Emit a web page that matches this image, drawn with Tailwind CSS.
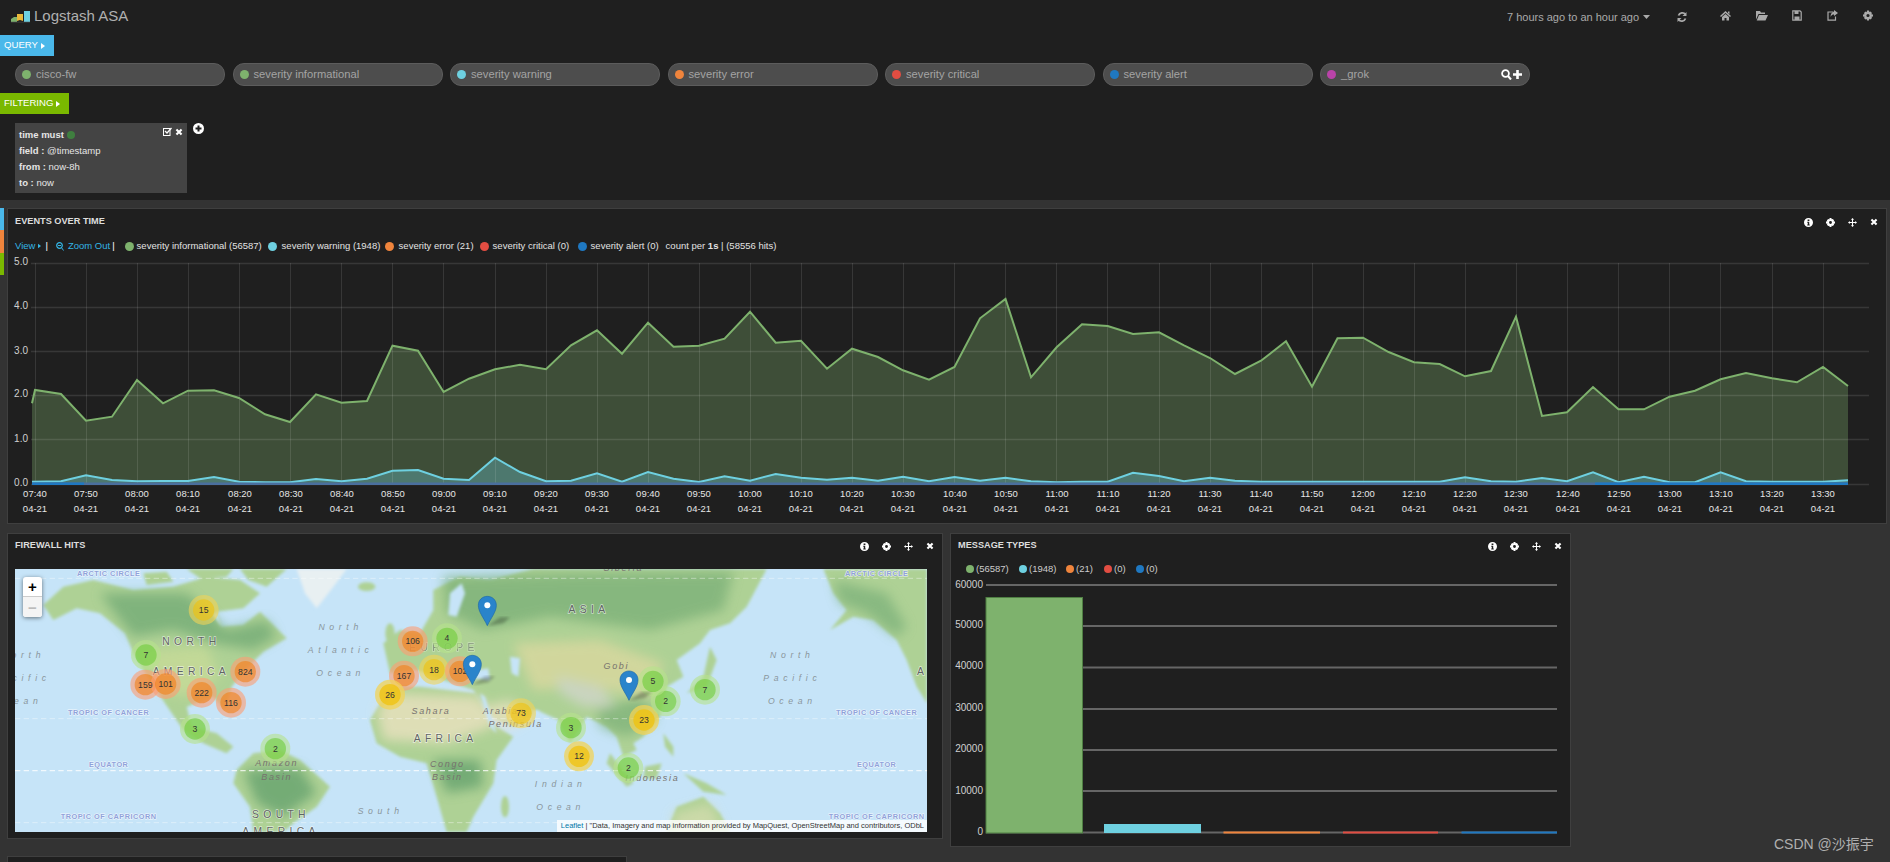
<!DOCTYPE html>
<html lang="en">
<head>
<meta charset="utf-8">
<title>Logstash ASA</title>
<script src="https://cdn.jsdelivr.net/npm/@tailwindcss/browser@4"></script>
</head>
<body class="bg-[#333333] h-[862px] w-[1890px] overflow-hidden relative font-['Liberation_Sans',Arial,sans-serif] text-[10px] text-[#cccccc]">

<svg class="hidden" width="0" height="0">
  <defs>
    <symbol id="i-info" viewBox="0 0 10 10"><path fill="currentColor" fill-rule="evenodd" d="M5 0a5 5 0 1 1 0 10A5 5 0 0 1 5 0ZM4 1.7V3.2H6V1.7ZM3.6 4.2V5.2H4.2V7.2H3.6V8.2H6.4V7.2H5.8V4.2Z"/></symbol>
    <symbol id="i-gear" viewBox="0 0 10 10"><path fill="currentColor" fill-rule="evenodd" d="M4 0H6L6.3 1.5 7.5 1 9 2.5 8.3 3.7 10 4V6L8.5 6.3 9 7.5 7.5 9 6.3 8.3 6 10H4L3.7 8.5 2.5 9 1 7.5 1.7 6.3 0 6V4L1.5 3.7 1 2.5 2.5 1 3.7 1.7ZM5 3.4A1.6 1.6 0 1 0 5 6.6 1.6 1.6 0 0 0 5 3.4Z"/></symbol>
    <symbol id="i-move" viewBox="0 0 10 10"><path fill="currentColor" d="M5 0 6.8 2H5.6V4.4H8V3.2L10 5 8 6.8V5.6H5.6V8H6.8L5 10 3.2 8H4.4V5.6H2V6.8L0 5 2 3.2V4.4H4.4V2H3.2Z"/></symbol>
    <symbol id="i-x" viewBox="0 0 10 10"><path stroke="currentColor" stroke-width="2.6" fill="none" d="M1.8 1.8 8.2 8.2M8.2 1.8 1.8 8.2"/></symbol>
    <symbol id="i-caret" viewBox="0 0 4 6"><path fill="currentColor" d="M0 0 4 3 0 6Z"/></symbol>
  </defs>
</svg>

<!-- top area -->
<section class="h-[200px] bg-[#1f1f1f] relative">
  <nav class="h-[35px] flex items-start">
    <svg class="mt-[11px] ml-[11px]" width="20" height="12" viewBox="0 0 20 12"><path fill="#7eb26d" d="M0 8 3 6H6V11H0Z"/><path fill="#eab839" d="M6 3H12V10L9 9 6 10Z"/><path fill="#6ed0e0" d="M13 0H19V11H13Z"/><path fill="#444" d="M0 10.5H19V12H0Z" opacity=".5"/></svg>
    <h1 class="ml-[3px] mt-[7px] text-[15px] leading-[18px] font-normal text-[#b0b0b0]">Logstash ASA</h1>
    <div class="ml-auto mt-[11px] flex items-center text-[#aaaaaa] pr-[17px]">
      <span class="text-[11px] leading-[12px] w-[132px] whitespace-nowrap">7 hours ago to an hour ago</span>
      <svg class="ml-[4px]" width="7" height="4" viewBox="0 0 7 4"><path fill="currentColor" d="M0 0H7L3.5 4Z"/></svg>
      <svg class="ml-[27px]" width="10" height="12" viewBox="0 0 10 12"><path fill="none" stroke="currentColor" stroke-width="1.8" d="M8.5 3.5A4 4 0 0 0 1.5 4.5M1.5 8.500A4 4 0 0 0 8.500 7.500"/><path fill="currentColor" d="M9.500 1V5H5.500ZM.5 11V7H4.500Z"/></svg>
      <svg class="ml-[33px] -mt-[3px]" width="11" height="11" viewBox="0 0 11 11"><path fill="currentColor" d="M5.500 1 11 6 10 7 5.500 3 1 7 0 6ZM2 7 5.500 4 9 7V10.500H6.500V8H4.500V10.500H2ZM8 1.500H9.500V4L8 3Z"/></svg>
      <svg class="ml-[25px] -mt-[3px]" width="12" height="11" viewBox="0 0 12 11"><path fill="currentColor" d="M0 1H4L5 2.500H9V4H2.500L0 9.500ZM3 5H12L9.500 10.500H.7Z"/></svg>
      <svg class="ml-[24px] -mt-[3px]" width="10" height="11" viewBox="0 0 10 11"><path fill="none" stroke="currentColor" stroke-width="1.200" d="M.8.8H8L9.200 2V10.200H.8Z"/><path fill="currentColor" d="M2.500 1H6.500V4H2.500ZM2.500 6.500H7.500V10H2.500Z"/></svg>
      <svg class="ml-[25px] -mt-[3px]" width="11" height="11" viewBox="0 0 11 11"><path fill="none" stroke="currentColor" stroke-width="1.200" d="M6.500 2H1V10.200H8.500V6.500"/><path fill="currentColor" d="M7 0 11 3 7 6V4.500C5.500 4.500 4.500 5 3.500 7 3.500 4 5 2 7 1.800Z"/></svg>
      <svg class="ml-[25px] -mt-[3px] w-[10px] h-[11px]"><use href="#i-gear"/></svg>
    </div>
  </nav>

  <button class="block h-[21px] w-[54px] bg-[#4ab8ea] text-white text-[9.6px] text-left pl-[4px] flex items-center gap-[3px]">QUERY <svg class="w-[4px] h-[6px]"><use href="#i-caret"/></svg></button>

  <div class="mt-[7px] ml-[15px] flex gap-[7.5px]">
    <div class="w-[210px] h-[23px] rounded-[11px] bg-[#4d4d4d] border border-[#5c5c5c] flex items-center pl-[6px] text-[11.2px] text-[#a4a4a4]"><i class="w-[9px] h-[9px] rounded-full bg-[#7eb26d] mr-[5px]"></i>cisco-fw</div>
    <div class="w-[210px] h-[23px] rounded-[11px] bg-[#4d4d4d] border border-[#5c5c5c] flex items-center pl-[6px] text-[11.2px] text-[#a4a4a4]"><i class="w-[9px] h-[9px] rounded-full bg-[#7eb26d] mr-[5px]"></i>severity informational</div>
    <div class="w-[210px] h-[23px] rounded-[11px] bg-[#4d4d4d] border border-[#5c5c5c] flex items-center pl-[6px] text-[11.2px] text-[#a4a4a4]"><i class="w-[9px] h-[9px] rounded-full bg-[#6ed0e0] mr-[5px]"></i>severity warning</div>
    <div class="w-[210px] h-[23px] rounded-[11px] bg-[#4d4d4d] border border-[#5c5c5c] flex items-center pl-[6px] text-[11.2px] text-[#a4a4a4]"><i class="w-[9px] h-[9px] rounded-full bg-[#ef843c] mr-[5px]"></i>severity error</div>
    <div class="w-[210px] h-[23px] rounded-[11px] bg-[#4d4d4d] border border-[#5c5c5c] flex items-center pl-[6px] text-[11.2px] text-[#a4a4a4]"><i class="w-[9px] h-[9px] rounded-full bg-[#e24d42] mr-[5px]"></i>severity critical</div>
    <div class="w-[210px] h-[23px] rounded-[11px] bg-[#4d4d4d] border border-[#5c5c5c] flex items-center pl-[6px] text-[11.2px] text-[#a4a4a4]"><i class="w-[9px] h-[9px] rounded-full bg-[#1f78c1] mr-[5px]"></i>severity alert</div>
    <div class="w-[210px] h-[23px] rounded-[11px] bg-[#4d4d4d] border border-[#5c5c5c] flex items-center pl-[6px] text-[11.2px] text-[#a4a4a4]"><i class="w-[9px] h-[9px] rounded-full bg-[#ba43a9] mr-[5px]"></i>_grok
      <span class="ml-auto mr-[7px] flex items-center gap-[1px] text-white">
        <svg width="11" height="11" viewBox="0 0 11 11"><circle cx="4.500" cy="4.500" r="3.400" fill="none" stroke="currentColor" stroke-width="1.800"/><path stroke="currentColor" stroke-width="2" d="M7 7 10 10.500"/></svg>
        <svg width="9" height="9" viewBox="0 0 9 9"><path stroke="currentColor" stroke-width="2.600" d="M4.500 0V9M0 4.500H9"/></svg>
      </span>
    </div>
  </div>

  <button class="block mt-[7px] h-[21px] w-[69px] bg-[#7ab800] text-white text-[9.6px] text-left pl-[4px] flex items-center gap-[3px]">FILTERING <svg class="w-[4px] h-[6px]"><use href="#i-caret"/></svg></button>

  <div class="mt-[9px] ml-[15px] flex items-start">
    <div class="w-[172px] h-[70px] bg-[#444444] pl-[4px] pt-[4px] text-[9.5px] leading-[16px] text-[#e6e6e6] relative">
      <div class="flex items-center font-bold">time must <i class="ml-[3px] w-[8px] h-[8px] rounded-full bg-[#3f7f3f]"></i></div>
      <div><b>field :</b> @timestamp</div>
      <div><b>from :</b> now-8h</div>
      <div><b>to :</b> now</div>
      <div class="absolute top-[4px] right-[4px] flex items-center gap-[3px] text-white">
        <svg width="9" height="9" viewBox="0 0 9 9"><rect x=".5" y="1.500" width="6.500" height="7" fill="none" stroke="currentColor"/><path fill="none" stroke="currentColor" stroke-width="1.300" d="M2 4 4 6 8.500 1"/></svg>
        <svg class="w-[8px] h-[8px]"><use href="#i-x"/></svg>
      </div>
    </div>
    <svg class="ml-[6px]" width="11" height="11" viewBox="0 0 11 11"><path fill="#ffffff" fill-rule="evenodd" d="M5.500 0a5.500 5.500 0 1 1 0 11 5.500 5.500 0 0 1 0-11ZM4.500 2.500V4.500H2.500V6.500H4.500V8.500H6.500V6.500H8.500V4.500H6.500V2.500Z"/></svg>
  </div>
</section>

<!-- events over time -->
<div class="mt-[8px] flex items-start">
  <div class="w-[4px] mr-[3px] flex flex-col">
    <div class="h-[22px] bg-[#4ab8ea]"></div>
    <div class="h-[23px] bg-[#ef843c]"></div>
    <div class="h-[22px] bg-[#7ab800]"></div>
  </div>
  <article class="w-[1880px] h-[316px] bg-[#1f1f1f] border border-[#3f3f3f]">
    <header class="h-[26px] flex items-center pl-[7px] pr-[8px]">
      <h2 class="text-[9.2px] font-bold text-[#dddddd]">EVENTS OVER TIME</h2>
      <div class="ml-auto flex items-center gap-[13px] text-white">
        <svg class="w-[9px] h-[9px]"><use href="#i-info"/></svg>
        <svg class="w-[9px] h-[9px]"><use href="#i-gear"/></svg>
        <svg class="w-[9px] h-[9px]"><use href="#i-move"/></svg>
        <svg class="w-[8px] h-[8px]"><use href="#i-x"/></svg>
      </div>
    </header>
    <div class="h-[22px] flex items-center pl-[7px] text-[9.5px] text-[#e2e2e2] whitespace-nowrap">
      <span class="text-[#33b5e5]">View</span>
      <svg class="ml-[3px] w-[3px] h-[6px] text-[#33b5e5]"><use href="#i-caret"/></svg>
      <span class="ml-[4px] mr-[8px] text-white">|</span>
      <svg class="mr-[4px] text-[#33b5e5]" width="8" height="9" viewBox="0 0 8 9"><circle cx="3.500" cy="3.500" r="2.800" fill="none" stroke="currentColor" stroke-width="1.200"/><path stroke="currentColor" d="M2 3.500H5M5.500 5.500 7.500 8.500"/></svg>
      <span class="text-[#33b5e5]">Zoom Out</span>
      <span class="ml-[2px] mr-[10px] text-white">|</span>
      <i class="w-[9px] h-[9px] rounded-full bg-[#7eb26d] mr-[3px]"></i><span class="w-[131px]">severity informational (56587)</span>
      <i class="w-[9px] h-[9px] rounded-full bg-[#6ed0e0] mr-[5px]"></i><span class="w-[103px]">severity warning (1948)</span>
      <i class="w-[9px] h-[9px] rounded-full bg-[#ef843c] mr-[5px]"></i><span class="w-[81px]">severity error (21)</span>
      <i class="w-[9px] h-[9px] rounded-full bg-[#e24d42] mr-[4px]"></i><span class="w-[85px]">severity critical (0)</span>
      <i class="w-[9px] h-[9px] rounded-full bg-[#1f78c1] mr-[4px]"></i><span class="w-[75px]">severity alert (0)</span>
      <span>count per <b>1s</b> | (58556 hits)</span>
    </div>
    <svg class="block" width="1878" height="266" viewBox="8 257 1878 266">
      <!-- series -->
      <polygon fill="#7eb26d" fill-opacity=".32" points="32,484 32,403.3 35,390 61,394 86,420.700 112,416.700 137,380 163,403.300 188,390.700 214,390.300 239,398 265,414.300 290,422 316,394.300 341.500,402.700 367,401 392.500,345.700 418,350.700 443.600,392 469,378.700 495,369.300 520,364.700 546,369.300 571,345.300 597,330.300 622,353.700 648,322.700 673.500,346.700 699,345.700 724.600,338.700 750,311.700 775.700,342.700 801,340.700 827,368.700 852,348.700 878,357 903,370.300 929,379.700 954.500,367 980,318.300 1005.500,299 1031,377.300 1056.600,347.300 1082,324.300 1107.700,326 1133,334 1159,332.300 1184,345.300 1210,358 1235,374 1261,360.700 1286,341.300 1312,386.700 1337.500,338.300 1363,337.700 1388.600,352 1414,362.300 1439.700,364 1465,376.300 1491,371 1516,316.700 1542,416 1567,412.300 1593,387 1618.500,409.300 1644,409.300 1669.600,396.700 1695,390.700 1720.600,379.300 1746,373 1772,378.300 1797,382.300 1823,367 1848,386 1848,484"/>
      <polygon fill="#6ed0e0" fill-opacity=".32" points="32,484 32,481.700 61,481.300 86,475.300 112,480 137,481.300 163,481 188,481 214,477 239,481.700 265,482.300 290,482.300 316,479 341.500,481.300 367,478.700 392.500,470.700 418,470 443.600,478.700 469,480 495,457.700 520,472 546,481.300 571,480.700 597,473.300 622,481.700 648,472 673.500,478.700 699,482 724.600,476.300 750,480.700 775.700,474 801,477.700 827,479.700 852,477.700 878,480.700 903,476.700 929,481.300 954.500,477 980,480.700 1005.500,477.700 1031,481.300 1056.600,482.300 1082,481.700 1107.700,481.700 1133,472.700 1159,476 1184,481.300 1210,477.700 1235,480.700 1261,481.700 1286,481.700 1312,481.700 1337.500,481.700 1363,481.700 1388.600,481.700 1414,481.700 1439.700,481.700 1465,477.300 1491,481.300 1516,481.700 1542,478 1567,481.300 1593,472.300 1618.500,482.300 1644,476.700 1669.600,482.300 1695,482.300 1720.600,472.300 1746,481.300 1772,481.700 1797,481.700 1823,481.700 1848,480.300 1848,484"/>
      <!-- grid -->
      <g stroke="#ffffff" stroke-opacity=".11" stroke-width="1">
        <path d="M31 263.500H1869M31 307.500H1869M31 351.500H1869M31 395.500H1869M31 439.500H1869M31 484.500H1869" stroke-width="1.500"/>
        <path d="M35.500 263V484M86.500 263V484M137.500 263V484M188.500 263V484M239.500 263V484M290.500 263V484M341.500 263V484M392.500 263V484M443.500 263V484M495.500 263V484M546.500 263V484M597.500 263V484M648.500 263V484M699.500 263V484M750.500 263V484M801.500 263V484M852.500 263V484M903.500 263V484M954.500 263V484M1005.500 263V484M1056.500 263V484M1107.500 263V484M1159.500 263V484M1210.500 263V484M1261.500 263V484M1312.500 263V484M1363.500 263V484M1414.500 263V484M1465.500 263V484M1516.500 263V484M1567.500 263V484M1618.500 263V484M1669.500 263V484M1720.500 263V484M1772.500 263V484M1823.500 263V484"/>
      </g>
      <polyline fill="none" stroke="#7eb26d" stroke-width="2" points="32,403.3 35,390 61,394 86,420.700 112,416.700 137,380 163,403.300 188,390.700 214,390.300 239,398 265,414.300 290,422 316,394.300 341.500,402.700 367,401 392.500,345.700 418,350.700 443.600,392 469,378.700 495,369.300 520,364.700 546,369.300 571,345.300 597,330.300 622,353.700 648,322.700 673.500,346.700 699,345.700 724.600,338.700 750,311.700 775.700,342.700 801,340.700 827,368.700 852,348.700 878,357 903,370.300 929,379.700 954.500,367 980,318.300 1005.500,299 1031,377.300 1056.600,347.300 1082,324.300 1107.700,326 1133,334 1159,332.300 1184,345.300 1210,358 1235,374 1261,360.700 1286,341.300 1312,386.700 1337.500,338.300 1363,337.700 1388.600,352 1414,362.300 1439.700,364 1465,376.300 1491,371 1516,316.700 1542,416 1567,412.300 1593,387 1618.500,409.300 1644,409.300 1669.600,396.700 1695,390.700 1720.600,379.300 1746,373 1772,378.300 1797,382.300 1823,367 1848,386"/>
      <polyline fill="none" stroke="#6ed0e0" stroke-width="2" points="32,481.700 61,481.300 86,475.300 112,480 137,481.300 163,481 188,481 214,477 239,481.700 265,482.300 290,482.300 316,479 341.500,481.300 367,478.700 392.500,470.700 418,470 443.600,478.700 469,480 495,457.700 520,472 546,481.300 571,480.700 597,473.300 622,481.700 648,472 673.500,478.700 699,482 724.600,476.300 750,480.700 775.700,474 801,477.700 827,479.700 852,477.700 878,480.700 903,476.700 929,481.300 954.500,477 980,480.700 1005.500,477.700 1031,481.300 1056.600,482.300 1082,481.700 1107.700,481.700 1133,472.700 1159,476 1184,481.300 1210,477.700 1235,480.700 1261,481.700 1286,481.700 1312,481.700 1337.500,481.700 1363,481.700 1388.600,481.700 1414,481.700 1439.700,481.700 1465,477.300 1491,481.300 1516,481.700 1542,478 1567,481.300 1593,472.300 1618.500,482.300 1644,476.700 1669.600,482.300 1695,482.300 1720.600,472.300 1746,481.300 1772,481.700 1797,481.700 1823,481.700 1848,480.300"/>
      <rect x="32" y="482.500" width="1816" height="2.500" fill="#4a6f9e"/>
      <rect x="32" y="482.500" width="52" height="2.500" fill="#1f78c1"/>
      <rect x="1595" y="482.500" width="253" height="2.500" fill="#1f78c1"/>
      <!-- y axis -->
      <g fill="#d0d0d0" font-size="10" text-anchor="end">
        <text x="28" y="265">5.0</text><text x="28" y="309">4.0</text><text x="28" y="354">3.0</text><text x="28" y="397">2.0</text><text x="28" y="442">1.0</text><text x="28" y="486">0.0</text>
      </g>
      <!-- x axis -->
      <g fill="#e6e6e6" font-size="9.5" text-anchor="middle">
        <text x="35" y="497">07:40</text><text x="35" y="512">04-21</text>
        <text x="86" y="497">07:50</text><text x="86" y="512">04-21</text>
        <text x="137" y="497">08:00</text><text x="137" y="512">04-21</text>
        <text x="188" y="497">08:10</text><text x="188" y="512">04-21</text>
        <text x="240" y="497">08:20</text><text x="240" y="512">04-21</text>
        <text x="291" y="497">08:30</text><text x="291" y="512">04-21</text>
        <text x="342" y="497">08:40</text><text x="342" y="512">04-21</text>
        <text x="393" y="497">08:50</text><text x="393" y="512">04-21</text>
        <text x="444" y="497">09:00</text><text x="444" y="512">04-21</text>
        <text x="495" y="497">09:10</text><text x="495" y="512">04-21</text>
        <text x="546" y="497">09:20</text><text x="546" y="512">04-21</text>
        <text x="597" y="497">09:30</text><text x="597" y="512">04-21</text>
        <text x="648" y="497">09:40</text><text x="648" y="512">04-21</text>
        <text x="699" y="497">09:50</text><text x="699" y="512">04-21</text>
        <text x="750" y="497">10:00</text><text x="750" y="512">04-21</text>
        <text x="801" y="497">10:10</text><text x="801" y="512">04-21</text>
        <text x="852" y="497">10:20</text><text x="852" y="512">04-21</text>
        <text x="903" y="497">10:30</text><text x="903" y="512">04-21</text>
        <text x="955" y="497">10:40</text><text x="955" y="512">04-21</text>
        <text x="1006" y="497">10:50</text><text x="1006" y="512">04-21</text>
        <text x="1057" y="497">11:00</text><text x="1057" y="512">04-21</text>
        <text x="1108" y="497">11:10</text><text x="1108" y="512">04-21</text>
        <text x="1159" y="497">11:20</text><text x="1159" y="512">04-21</text>
        <text x="1210" y="497">11:30</text><text x="1210" y="512">04-21</text>
        <text x="1261" y="497">11:40</text><text x="1261" y="512">04-21</text>
        <text x="1312" y="497">11:50</text><text x="1312" y="512">04-21</text>
        <text x="1363" y="497">12:00</text><text x="1363" y="512">04-21</text>
        <text x="1414" y="497">12:10</text><text x="1414" y="512">04-21</text>
        <text x="1465" y="497">12:20</text><text x="1465" y="512">04-21</text>
        <text x="1516" y="497">12:30</text><text x="1516" y="512">04-21</text>
        <text x="1568" y="497">12:40</text><text x="1568" y="512">04-21</text>
        <text x="1619" y="497">12:50</text><text x="1619" y="512">04-21</text>
        <text x="1670" y="497">13:00</text><text x="1670" y="512">04-21</text>
        <text x="1721" y="497">13:10</text><text x="1721" y="512">04-21</text>
        <text x="1772" y="497">13:20</text><text x="1772" y="512">04-21</text>
        <text x="1823" y="497">13:30</text><text x="1823" y="512">04-21</text>
      </g>
    </svg>
  </article>
</div>

<!-- second row -->
<div class="mt-[9px] ml-[7px] flex items-start gap-[7px]">
  <article class="w-[936px] h-[306px] bg-[#1f1f1f] border border-[#3f3f3f]">
    <header class="h-[24px] flex items-center pl-[7px] pr-[8px] mb-[11px]">
      <h2 class="text-[9.2px] font-bold text-[#dddddd]">FIREWALL HITS</h2>
      <div class="ml-auto flex items-center gap-[13px] text-white">
        <svg class="w-[9px] h-[9px]"><use href="#i-info"/></svg>
        <svg class="w-[9px] h-[9px]"><use href="#i-gear"/></svg>
        <svg class="w-[9px] h-[9px]"><use href="#i-move"/></svg>
        <svg class="w-[8px] h-[8px]"><use href="#i-x"/></svg>
      </div>
    </header>
    <div class="relative ml-[7px] w-[912px] h-[263px] overflow-hidden bg-[#c6e4f8]">
      <svg class="block" width="912" height="263" viewBox="45 117 2736 789">
        <defs>
          <filter id="soft" x="-10%" y="-10%" width="120%" height="120%"><feGaussianBlur stdDeviation="4"/></filter>
          <filter id="softer" x="-20%" y="-20%" width="140%" height="140%"><feGaussianBlur stdDeviation="18"/></filter>
        </defs>
        <rect x="45" y="117" width="2736" height="789" fill="#c6e4f8"/>
        <g filter="url(#soft)" fill="#aed195">
          <path d="M130 225 190 170 280 150 400 180 520 170 620 140 720 150 780 190 730 235 650 245 665 290 730 285 780 245 860 325 790 365 735 420 695 470 675 540 640 500 560 530 575 590 650 610 700 650 680 670 610 640 550 600 495 520 450 450 400 370 375 310 300 250 230 235 160 270Z"/>
          <path d="M560 117H700L680 140 600 145ZM720 117H860L800 170 745 150ZM430 130 500 125 520 155 440 165Z"/>
          <path d="M710 720 760 670 840 660 900 690 990 770 950 830 880 880 850 906H760L750 830 700 760Z"/>
          <path d="M1110 570 1170 470 1260 470 1340 480 1425 490 1475 580 1540 620 1490 690 1480 760 1420 860 1400 906H1340L1310 800 1280 700 1200 680 1130 640Z"/>
          <path d="M1150 340 1200 300 1260 310 1300 240 1300 180 1380 140 1470 150 1600 117H2300L2240 230 2190 280 2130 300 2100 340 2030 390 2050 440 2000 470 1980 560 1930 620 1900 640 1910 660 1870 680 1850 620 1820 590 1760 560 1710 640 1675 570 1610 540 1540 590 1470 560 1420 480 1330 450 1250 420 1170 430Z"/>
          <ellipse cx="1170" cy="310" rx="14" ry="30"/>
          <ellipse cx="1100" cy="170" rx="26" ry="13"/>
          <path d="M2060 490 2110 440 2130 350 2150 390 2120 470Z"/>
          <path d="M1830 670 1900 760 1880 770 1820 700ZM1935 710 1985 700 1970 745 1930 745ZM2050 730 2120 760 2180 795 2110 785ZM1990 610 2020 650 2020 680 1995 650Z"/>
          <path d="M2000 906 2030 830 2110 800 2160 850 2190 906Z"/>
          <ellipse cx="1515" cy="830" rx="12" ry="32"/>
          <path d="M2470 117H2781V520L2750 470 2720 390 2690 330 2620 270 2560 260 2490 300 2540 240 2500 190Z"/>
        </g>
        <g filter="url(#softer)" opacity=".72">
          <path fill="#6ea873" d="M300 190 560 190 640 260 680 300 800 270 830 320 760 360 640 340 520 300 400 320 360 270Z"/>
          <path fill="#cbdc98" d="M420 360 620 350 660 440 560 500 480 480Z"/>
          <path fill="#5f9e6a" d="M730 720 900 710 950 790 850 860 770 820Z"/>
          <path fill="#f1e3c4" d="M1130 540 1180 490 1440 500 1480 590 1340 640 1150 630Z"/>
          <path fill="#f1e3c4" d="M1450 530 1530 510 1590 560 1520 600 1470 570Z"/>
          <path fill="#5f9e6a" d="M1300 690 1440 690 1450 770 1340 790Z"/>
          <path fill="#dfd9a0" d="M1540 340 1800 330 1990 400 1950 500 1750 470 1600 480Z"/>
          <path fill="#78ae76" d="M1330 140 1700 130 2200 125 2170 240 1950 300 1650 260 1450 300 1340 250Z"/>
          <path fill="#d4d6d0" d="M1670 440 1800 470 1850 530 1750 530 1680 490Z"/>
          <path fill="#7bb078" d="M1790 540 1930 500 1970 570 1880 620 1800 590Z"/>
          <path fill="#7ab079" d="M2500 150 2660 190 2720 290 2690 320 2600 250 2520 220Z"/>
          <path fill="#d7ddb0" d="M2020 850 2130 820 2170 900 2020 906Z"/>
        </g>
        <g filter="url(#soft)">
          <path fill="#e8f0f2" d="M890 117H1040L1000 170 950 235 915 190Z"/>
          <path fill="#c6e4f8" d="M1350 190 1385 160 1395 190 1370 260 1345 255ZM1400 425 1465 415 1470 450 1410 445ZM1530 380 1560 385 1555 440 1535 430ZM1440 490 1455 500 1490 610 1470 590ZM1590 540 1620 545 1610 560ZM640 255 665 290 650 245Z"/>
        </g>
        <g stroke="#ffffff" stroke-opacity=".6" fill="none" stroke-dasharray="16 10">
          <path stroke-width="2" d="M45 145H2781M45 566H2781M45 878H2781"/>
          <path stroke-width="4" stroke-opacity=".75" d="M45 722H2781"/>
        </g>
        <g font-size="22" font-weight="700" fill="#8fa2da" text-anchor="middle" letter-spacing="1.500" stroke="#ffffff" stroke-width="3" stroke-opacity=".8" paint-order="stroke">
          <text x="326" y="137">ARCTIC CIRCLE</text><text x="2630" y="137">ARCTIC CIRCLE</text>
          <text x="326" y="555">TROPIC OF CANCER</text><text x="2630" y="555">TROPIC OF CANCER</text>
          <text x="326" y="711">EQUATOR</text><text x="2630" y="711">EQUATOR</text>
          <text x="326" y="867">TROPIC OF CAPRICORN</text><text x="2630" y="867">TROPIC OF CAPRICORN</text>
        </g>
        <g font-size="31" fill="#5f6464" text-anchor="middle" letter-spacing="13" stroke="#ffffff" stroke-width="4" stroke-opacity=".6" paint-order="stroke">
          <text x="574" y="346">NORTH</text><text x="574" y="436">AMERICA</text>
          <text x="843" y="864">SOUTH</text><text x="843" y="915">AMERICA</text>
          <text x="1332" y="364" opacity=".55">EUROPE</text><text x="1337" y="636">AFRICA</text>
          <text x="1767" y="249">ASIA</text><text x="2768" y="436">A</text>
        </g>
        <g font-size="26" font-style="italic" fill="#8a969c" text-anchor="middle" letter-spacing="14">
          <text x="1022" y="301">North</text><text x="1022" y="369">Atlantic</text><text x="1022" y="437">Ocean</text>
          <text x="2377" y="385">North</text><text x="2377" y="453">Pacific</text><text x="2377" y="521">Ocean</text>
          <text x="85" y="385">orth</text><text x="95" y="453">cific</text><text x="85" y="521">ean</text>
          <text x="1142" y="852">South</text><text x="1682" y="772">Indian</text><text x="1682" y="840">Ocean</text>
        </g>
        <g font-size="27" font-style="italic" fill="#77726e" text-anchor="middle" letter-spacing="5">
          <text x="1293" y="551">Sahara</text><text x="1342" y="710">Congo</text><text x="1342" y="749">Basin</text>
          <text x="830" y="708">Amazon</text><text x="830" y="749">Basin</text>
          <text x="1870" y="124">Siberia</text>
          <text x="1849" y="418">Gobi</text><text x="1512" y="552">Arabian</text><text x="1547" y="590">Peninsula</text><text x="1957" y="754">Indonesia</text>
        </g>
        <!-- clusters -->
        <g>
          <circle cx="611" cy="240" r="45" fill="#f1d357" fill-opacity=".6"/><circle cx="611" cy="240" r="32" fill="#f0c20c" fill-opacity=".6"/>
          <circle cx="438" cy="375" r="45" fill="#b5e28c" fill-opacity=".6"/><circle cx="438" cy="375" r="32" fill="#6ecc39" fill-opacity=".6"/>
          <circle cx="436" cy="464" r="45" fill="#fd9c73" fill-opacity=".6"/><circle cx="436" cy="464" r="32" fill="#f18017" fill-opacity=".6"/>
          <circle cx="497" cy="462" r="45" fill="#fd9c73" fill-opacity=".6"/><circle cx="497" cy="462" r="32" fill="#f18017" fill-opacity=".6"/>
          <circle cx="605" cy="488" r="45" fill="#fd9c73" fill-opacity=".6"/><circle cx="605" cy="488" r="32" fill="#f18017" fill-opacity=".6"/>
          <circle cx="693" cy="518" r="45" fill="#fd9c73" fill-opacity=".6"/><circle cx="693" cy="518" r="32" fill="#f18017" fill-opacity=".6"/>
          <circle cx="736" cy="425" r="45" fill="#fd9c73" fill-opacity=".6"/><circle cx="736" cy="425" r="32" fill="#f18017" fill-opacity=".6"/>
          <circle cx="585" cy="597" r="45" fill="#b5e28c" fill-opacity=".6"/><circle cx="585" cy="597" r="32" fill="#6ecc39" fill-opacity=".6"/>
          <circle cx="826" cy="656" r="45" fill="#b5e28c" fill-opacity=".6"/><circle cx="826" cy="656" r="32" fill="#6ecc39" fill-opacity=".6"/>
          <circle cx="1238" cy="334" r="45" fill="#fd9c73" fill-opacity=".6"/><circle cx="1238" cy="334" r="32" fill="#f18017" fill-opacity=".6"/>
          <circle cx="1341" cy="325" r="45" fill="#b5e28c" fill-opacity=".6"/><circle cx="1341" cy="325" r="32" fill="#6ecc39" fill-opacity=".6"/>
          <circle cx="1212" cy="437" r="45" fill="#fd9c73" fill-opacity=".6"/><circle cx="1212" cy="437" r="32" fill="#f18017" fill-opacity=".6"/>
          <circle cx="1302" cy="419" r="45" fill="#f1d357" fill-opacity=".6"/><circle cx="1302" cy="419" r="32" fill="#f0c20c" fill-opacity=".6"/>
          <circle cx="1380" cy="424" r="45" fill="#fd9c73" fill-opacity=".6"/><circle cx="1380" cy="424" r="32" fill="#f18017" fill-opacity=".6"/>
          <circle cx="1170" cy="494" r="45" fill="#f1d357" fill-opacity=".75"/><circle cx="1170" cy="494" r="32" fill="#f0c20c" fill-opacity=".75"/>
          <circle cx="1563" cy="550" r="45" fill="#f1d357" fill-opacity=".6"/><circle cx="1563" cy="550" r="32" fill="#f0c20c" fill-opacity=".6"/>
          <circle cx="1713" cy="593" r="45" fill="#b5e28c" fill-opacity=".6"/><circle cx="1713" cy="593" r="32" fill="#6ecc39" fill-opacity=".6"/>
          <circle cx="1737" cy="679" r="45" fill="#f1d357" fill-opacity=".75"/><circle cx="1737" cy="679" r="32" fill="#f0c20c" fill-opacity=".75"/>
          <circle cx="1885" cy="714" r="45" fill="#b5e28c" fill-opacity=".6"/><circle cx="1885" cy="714" r="32" fill="#6ecc39" fill-opacity=".6"/>
          <circle cx="1932" cy="570" r="45" fill="#f1d357" fill-opacity=".75"/><circle cx="1932" cy="570" r="32" fill="#f0c20c" fill-opacity=".75"/>
          <circle cx="1997" cy="514" r="45" fill="#b5e28c" fill-opacity=".6"/><circle cx="1997" cy="514" r="32" fill="#6ecc39" fill-opacity=".6"/>
          <circle cx="1959" cy="454" r="45" fill="#b5e28c" fill-opacity=".6"/><circle cx="1959" cy="454" r="32" fill="#6ecc39" fill-opacity=".6"/>
          <circle cx="2115" cy="479" r="45" fill="#b5e28c" fill-opacity=".6"/><circle cx="2115" cy="479" r="32" fill="#6ecc39" fill-opacity=".6"/>
        </g>
        <g font-size="26" fill="#333333" text-anchor="middle">
          <text x="611" y="249">15</text><text x="438" y="384">7</text><text x="436" y="473">159</text><text x="497" y="471">101</text><text x="605" y="497">222</text><text x="693" y="527">116</text><text x="736" y="434">824</text><text x="585" y="606">3</text><text x="826" y="665">2</text><text x="1238" y="343">106</text><text x="1341" y="334">4</text><text x="1212" y="446">167</text><text x="1302" y="428">18</text><text x="1380" y="433">102</text><text x="1170" y="503">26</text><text x="1563" y="559">73</text><text x="1713" y="602">3</text><text x="1737" y="688">12</text><text x="1885" y="723">2</text><text x="1932" y="579">23</text><text x="1997" y="523">2</text><text x="1959" y="463">5</text><text x="2115" y="488">7</text>
        </g>
        <!-- pins -->
        <g>
          <path fill="#000" opacity=".25" filter="url(#soft)" d="M1462 288 1500 262 1530 262 1510 280Z"/>
          <path fill="#2a84cb" stroke="#1e6aa8" stroke-width="2" d="M1462 287C1450 262 1435 245 1435 226 1435 210 1447 199 1462 199 1477 199 1489 210 1489 226 1489 245 1474 262 1462 287Z"/>
          <circle cx="1462" cy="226" r="9" fill="#fff"/>
          <path fill="#000" opacity=".25" filter="url(#soft)" d="M1417 465 1455 439 1485 439 1465 457Z"/>
          <path fill="#2a84cb" stroke="#1e6aa8" stroke-width="2" d="M1417 464C1405 439 1390 422 1390 403 1390 387 1402 376 1417 376 1432 376 1444 387 1444 403 1444 422 1429 439 1417 464Z"/>
          <circle cx="1417" cy="403" r="9" fill="#fff"/>
          <path fill="#000" opacity=".25" filter="url(#soft)" d="M1887 512 1925 486 1955 486 1935 504Z"/>
          <path fill="#2a84cb" stroke="#1e6aa8" stroke-width="2" d="M1887 511C1875 486 1860 469 1860 450 1860 434 1872 423 1887 423 1902 423 1914 434 1914 450 1914 469 1899 486 1887 511Z"/>
          <circle cx="1887" cy="450" r="9" fill="#fff"/>
        </g>
      </svg>
      <!-- zoom control -->
      <div class="absolute left-[8px] top-[8px] w-[19px] rounded-[3px] shadow-[0_1px_4px_rgba(0,0,0,.5)] bg-white overflow-hidden">
        <div class="h-[20px] flex items-center justify-center text-[15px] leading-none font-bold text-black border-b border-[#cccccc]">+</div>
        <div class="h-[20px] flex items-center justify-center text-[15px] leading-none font-bold text-[#bbbbbb] bg-[#f4f4f4]">−</div>
      </div>
      <!-- attribution -->
      <div class="absolute right-0 bottom-0 h-[12px] pl-[4px] pr-[3px] bg-white/80 text-[7.5px] leading-[12px] text-[#333333] whitespace-nowrap"><span class="text-[#0078a8]">Leaflet</span> | "Data, Imagery and map information provided by MapQuest, OpenStreetMap and contributors, ODbL</div>
    </div>
  </article>

  <article class="w-[621px] h-[314px] bg-[#1f1f1f] border border-[#3f3f3f]">
    <header class="h-[24px] flex items-center pl-[7px] pr-[8px]">
      <h2 class="text-[9.2px] font-bold text-[#dddddd]">MESSAGE TYPES</h2>
      <div class="ml-auto flex items-center gap-[13px] text-white">
        <svg class="w-[9px] h-[9px]"><use href="#i-info"/></svg>
        <svg class="w-[9px] h-[9px]"><use href="#i-gear"/></svg>
        <svg class="w-[9px] h-[9px]"><use href="#i-move"/></svg>
        <svg class="w-[8px] h-[8px]"><use href="#i-x"/></svg>
      </div>
    </header>
    <div class="h-[20px] mt-[1px] flex items-center pl-[15px] text-[9.5px] text-[#cccccc]">
      <i class="w-[8px] h-[8px] rounded-full bg-[#7eb26d] mr-[2px]"></i><span class="w-[43px]">(56587)</span>
      <i class="w-[8px] h-[8px] rounded-full bg-[#6ed0e0] mr-[2px]"></i><span class="w-[37px]">(1948)</span>
      <i class="w-[8px] h-[8px] rounded-full bg-[#ef843c] mr-[2px]"></i><span class="w-[28px]">(21)</span>
      <i class="w-[8px] h-[8px] rounded-full bg-[#e24d42] mr-[2px]"></i><span class="w-[22px]">(0)</span>
      <i class="w-[8px] h-[8px] rounded-full bg-[#1f78c1] mr-[2px]"></i><span>(0)</span>
    </div>
    <svg class="block" width="619" height="267" viewBox="951 579 619 267">
      <path stroke="#666666" stroke-width="1.800" d="M986 585H1557M986 626H1557M986 667.500H1557M986 709H1557M986 750H1557M986 791H1557M986 832.500H1557"/>
      <rect x="986" y="597.500" width="96.500" height="235.500" fill="#7eb26d" stroke="#4f7f43"/>
      <rect x="1104" y="824" width="97" height="9" fill="#6ed0e0"/>
      <rect x="1223.500" y="831.500" width="96.500" height="2" fill="#ef843c"/>
      <rect x="1343" y="831.500" width="95" height="2" fill="#e24d42"/>
      <rect x="1461.500" y="831.500" width="95.500" height="2" fill="#1f78c1"/>
      <g fill="#d0d0d0" font-size="10" text-anchor="end">
        <text x="983" y="588">60000</text><text x="983" y="628">50000</text><text x="983" y="669">40000</text><text x="983" y="711">30000</text><text x="983" y="752">20000</text><text x="983" y="794">10000</text><text x="983" y="835">0</text>
      </g>
    </svg>
  </article>
</div>

<!-- third row -->
<div class="mt-[9px] ml-[7px] w-[620px] h-[20px] bg-[#1f1f1f] border border-[#3f3f3f]"></div>

<div class="absolute left-[1774px] top-[835px] text-[14px] leading-[18px] text-[#b0b0b0] whitespace-nowrap font-['Liberation_Sans','Noto_Sans_CJK_SC',sans-serif]">CSDN @沙振宇</div>
</body>
</html>
